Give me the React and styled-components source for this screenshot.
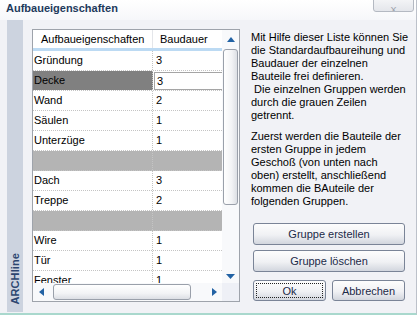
import React from "react";
import styled, { createGlobalStyle } from "styled-components";

const Global = createGlobalStyle`
  html, body {
    margin: 0;
    padding: 0;
    background: #ffffff;
  }
  body {
    font-family: "Liberation Sans", Arial, sans-serif;
    font-size: 11px;
    color: #000000;
  }
`;

const Window = styled.div`
  width: 416px;
  height: 313px;
  border-right: 1px solid #bcc1ca;
  border-bottom: 2px solid #a9d8cd;
  background: #f1f2f6;
  display: flex;
  flex-direction: column;
  overflow: hidden;
`;

const TitleBar = styled.div`
  height: 20px;
  flex: none;
  display: flex;
  align-items: flex-start;
  padding: 2px 2px 0 6px;
  box-sizing: border-box;
  background: linear-gradient(to bottom, #ffffff, #f6f7fa);
`;

const Title = styled.div`
  font-weight: bold;
  font-size: 11px;
  line-height: 13px;
  color: #1e3a5c;
`;

const CloseButton = styled.div`
  margin-left: auto;
  margin-top: -12px;
  width: 41px;
  height: 22px;
  box-sizing: border-box;
  border: 1px solid #b4b9c2;
  border-radius: 0 0 3px 3px;
  background: linear-gradient(to bottom, #ffffff, #e4e6eb);
  color: #9aa0aa;
  font-size: 9px;
  line-height: 8px;
  text-align: center;
  padding-top: 15px;
  overflow: hidden;
`;

const Body = styled.div`
  flex: 1;
  display: flex;
  align-items: flex-start;
  padding-left: 7px;
`;

const SideStrip = styled.div`
  align-self: stretch;
  width: 16px;
  margin-bottom: 1px;
  background: #ccd3df;
  display: flex;
  flex-direction: column;
  justify-content: flex-end;
  align-items: center;
  padding-bottom: 7px;
  box-sizing: border-box;
`;

const Brand = styled.div`
  writing-mode: vertical-rl;
  transform: rotate(180deg);
  font-weight: bold;
  font-size: 11px;
  color: #2c4670;
  letter-spacing: 0.1px;
`;

const ListPanel = styled.div`
  margin: 9px 0 0 9px;
  width: 208px;
  height: 273px;
  box-sizing: border-box;
  border: 1px solid #9ea3ab;
  background: #ffffff;
  display: grid;
  grid-template-columns: 189px 17px;
  grid-template-rows: 253px 18px;
`;

const Table = styled.div`
  overflow: hidden;
  display: flex;
  flex-direction: column;
`;

const HeaderRow = styled.div`
  flex: none;
  display: grid;
  grid-template-columns: 120px 69px;
  height: 21px;
  box-sizing: border-box;
  border-bottom: 3px solid #bcdaf3;
  background: #ffffff;
`;

const HeaderCell = styled.div`
  padding-left: ${(p) => p.$pad}px;
  line-height: 18px;
  border-right: ${(p) => (p.$last ? "none" : "1px solid #e4e6ea")};
  white-space: nowrap;
`;

const Row = styled.div`
  flex: none;
  display: grid;
  grid-template-columns: 120px 69px;
  height: 20px;
  box-sizing: border-box;
  border-bottom: 1px dotted #c4c4c4;
  background: ${(p) => (p.$sep ? "#b4b4b4" : "#ffffff")};
`;

const Cell = styled.div`
  padding-left: ${(p) => p.$pad}px;
  line-height: 19px;
  white-space: nowrap;
  border-right: ${(p) => (p.$last ? "none" : "1px dotted #c4c4c4")};
  background: ${(p) => (p.$sel ? "#808080" : "transparent")};
`;

const EditCell = styled.div`
  margin: 1px 0 0 1px;
  height: 18px;
  box-sizing: border-box;
  border: 1px solid #a5a5a5;
  border-right: none;
  background: #ffffff;
  padding-left: 2px;
  line-height: 16px;
`;

const VScroll = styled.div`
  display: flex;
  flex-direction: column;
  align-items: center;
  background: #f8f9fb;
`;

const ArrowBox = styled.div`
  flex: none;
  width: ${(p) => p.$w || 17}px;
  height: ${(p) => p.$h || 17}px;
  display: flex;
  align-items: center;
  justify-content: center;
`;

const VThumb = styled.div`
  width: 15px;
  height: 156px;
  box-sizing: border-box;
  border: 1px solid #9aa0aa;
  border-radius: 3px;
  background: linear-gradient(to right, #ffffff, #f2f3f5 60%, #dcdfe4);
`;

const Spacer = styled.div`
  flex: 1;
`;

const HScroll = styled.div`
  display: flex;
  align-items: center;
  background: #f8f9fb;
`;

const HThumb = styled.div`
  margin-left: 3px;
  width: 138px;
  height: 16px;
  box-sizing: border-box;
  border: 1px solid #9aa0aa;
  border-radius: 3px;
  background: linear-gradient(to bottom, #ffffff, #f2f3f5 60%, #dcdfe4);
`;

const Corner = styled.div`
  background: #eef0f6;
`;

const RightPane = styled.div`
  margin: 11px 0 0 11px;
  width: 156px;
  display: flex;
  flex-direction: column;
`;

const Paragraph = styled.div`
  line-height: 13px;
  white-space: pre;
  margin-bottom: ${(p) => p.$mb || 0}px;
`;

const Button = styled.div`
  position: relative;
  height: ${(p) => p.$h || 22}px;
  width: ${(p) => p.$w || 152}px;
  box-sizing: border-box;
  border: 1px solid #7a8497;
  border-radius: 3px;
  background: linear-gradient(to bottom, #fdfdfd, #f0f1f4 55%, #d2d6de);
  color: #1c2a48;
  display: flex;
  align-items: center;
  justify-content: center;
  margin-top: ${(p) => p.$mt || 0}px;
  margin-left: ${(p) => p.$ml || 0}px;

  &::after {
    content: "";
    display: ${(p) => (p.$focus ? "block" : "none")};
    position: absolute;
    inset: 2px;
    border: 1px dotted #222222;
  }
`;

const ButtonRow = styled.div`
  display: flex;
  gap: 6px;
  margin-top: 8px;
  margin-left: 2px;
`;

const Up = () => (
  <svg width="8" height="5" viewBox="0 0 8 5">
    <polygon points="0,5 4,0 8,5" fill="#2262a4" />
  </svg>
);

const Down = () => (
  <svg width="9" height="5" viewBox="0 0 9 5">
    <polygon points="0,0 9,0 4.5,5" fill="#2262a4" />
  </svg>
);

const Left = () => (
  <svg width="5" height="8" viewBox="0 0 5 8">
    <polygon points="5,0 5,8 0,4" fill="#2262a4" />
  </svg>
);

const Right = () => (
  <svg width="5" height="8" viewBox="0 0 5 8">
    <polygon points="0,0 5,4 0,8" fill="#2262a4" />
  </svg>
);

const rows = [
  { name: "Gründung", value: "3" },
  { name: "Decke", value: "3", selected: true },
  { name: "Wand", value: "2" },
  { name: "Säulen", value: "1" },
  { name: "Unterzüge", value: "1" },
  { sep: true },
  { name: "Dach", value: "3" },
  { name: "Treppe", value: "2" },
  { sep: true },
  { name: "Wire", value: "1" },
  { name: "Tür", value: "1" },
  { name: "Fenster", value: "1" },
];

const para1 = [
  "Mit Hilfe dieser Liste können Sie",
  "die Standardaufbaureihung und",
  "Baudauer der einzelnen",
  "Bauteile frei definieren.",
  " Die einzelnen Gruppen werden",
  "durch die grauen Zeilen",
  "getrennt.",
];

const para2 = [
  "Zuerst werden die Bauteile der",
  "ersten Gruppe in jedem",
  "Geschoß (von unten nach",
  "oben) erstellt, anschließend",
  "kommen die BAuteile der",
  "folgenden Gruppen.",
];

export default function App() {
  return (
    <>
      <Global />
      <Window>
        <TitleBar>
          <Title>Aufbaueigenschaften</Title>
          <CloseButton>X</CloseButton>
        </TitleBar>
        <Body>
          <SideStrip>
            <Brand>ARCHline</Brand>
          </SideStrip>
          <ListPanel>
            <Table>
              <HeaderRow>
                <HeaderCell $pad={8}>Aufbaueigenschaften</HeaderCell>
                <HeaderCell $pad={7} $last>
                  Baudauer
                </HeaderCell>
              </HeaderRow>
              {rows.map((r, i) => (
                <Row key={i} $sep={r.sep}>
                  <Cell $pad={1} $sel={r.selected}>
                    {r.name}
                  </Cell>
                  {r.selected ? (
                    <EditCell>{r.value}</EditCell>
                  ) : (
                    <Cell $pad={3} $last>
                      {r.value}
                    </Cell>
                  )}
                </Row>
              ))}
            </Table>
            <VScroll>
              <ArrowBox $h={19}>
                <Up />
              </ArrowBox>
              <VThumb />
              <Spacer />
              <ArrowBox $h={14}>
                <Down />
              </ArrowBox>
            </VScroll>
            <HScroll>
              <ArrowBox $w={17}>
                <Left />
              </ArrowBox>
              <HThumb />
              <Spacer />
              <ArrowBox $w={16}>
                <Right />
              </ArrowBox>
            </HScroll>
            <Corner />
          </ListPanel>
          <RightPane>
            <Paragraph $mb={8}>{para1.join("\n")}</Paragraph>
            <Paragraph>{para2.join("\n")}</Paragraph>
            <Button $mt={15} $ml={2}>
              Gruppe erstellen
            </Button>
            <Button $mt={5} $ml={2}>
              Gruppe löschen
            </Button>
            <ButtonRow>
              <Button $w={73} $h={21} $focus>
                Ok
              </Button>
              <Button $w={73} $h={21}>
                Abbrechen
              </Button>
            </ButtonRow>
          </RightPane>
        </Body>
      </Window>
    </>
  );
}
